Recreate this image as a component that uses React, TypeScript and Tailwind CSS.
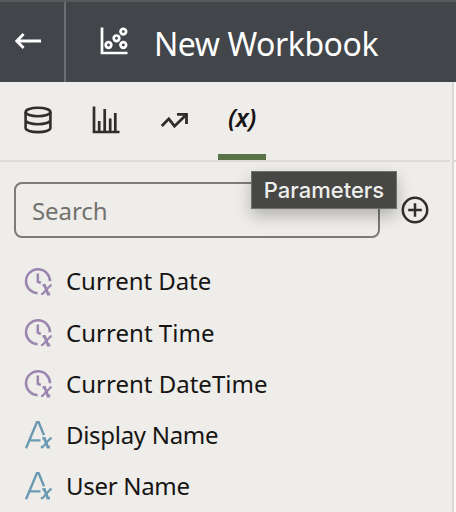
import React from 'react';

function ClockIcon() {
  return (
    <svg width="28" height="28" viewBox="0 0 28 28" fill="none" stroke="#9b86b0">
      <path d="M13.6 25.2A12 12 0 1 1 26 13.2" strokeWidth="2.5" />
      <path d="M13.8 5.5V13.6L16.8 15" strokeWidth="2.5" />
      <path d="M18.6 17.3H20.6L24 26H26.2" strokeWidth="2.8" />
      <path d="M27.8 17.3H26.6L18.5 26H17" strokeWidth="2.2" />
    </svg>
  );
}

function TextIcon() {
  return (
    <svg width="28" height="28" viewBox="0 0 28 28" fill="none" stroke="#6d9ab3">
      <path d="M2 27.2L12.9 1.2H14.7L20 14.2M5.8 19.4H16.5" strokeWidth="2.4" />
      <path d="M18.4 17.3H20.4L23.8 26.2H26" strokeWidth="2.8" />
      <path d="M27.8 17.3H26.4L18.5 26.2H16.8" strokeWidth="2.2" />
    </svg>
  );
}

const rows = [
  { label: 'Current Date', kind: 'clock', height: 'h-[52px]', icon: 'mt-[12px]', spacing: 'tracking-[-0.05px]' },
  { label: 'Current Time', kind: 'clock', height: 'h-[51px]', icon: 'mt-[11px]', spacing: 'tracking-[0.03px]' },
  { label: 'Current DateTime', kind: 'clock', height: 'h-[51px]', icon: 'mt-[11px]', spacing: 'tracking-[0.01px]' },
  { label: 'Display Name', kind: 'text', height: 'h-[51px]', icon: 'mt-[11px]', spacing: 'tracking-[-0.3px]' },
  { label: 'User Name', kind: 'text', height: 'h-[51px]', icon: 'mt-[11px]', spacing: 'tracking-[-0.3px]' },
];

export default function App() {
  return (
    <div className="h-[512px] w-[456px] overflow-hidden bg-[#eeede9] font-['Noto_Sans',sans-serif] text-[#161513]">
      <header className="flex h-[82px] border-t-2 border-[#58595b] bg-[#42454a] text-white">
        <div className="flex w-[66px] shrink-0 border-r-2 border-[#6c6e72] pl-[15px] pt-[31px]">
          <svg width="27" height="17" viewBox="0 0 27 17" fill="none" stroke="white" strokeWidth="2.8">
            <path d="M8.6 1L1.8 8L8.6 15M1.8 8H26" />
          </svg>
        </div>
        <div className="pl-[34px] pt-[24px]">
          <svg width="29" height="30" viewBox="0 0 29 30" fill="none" stroke="white" strokeWidth="2.7">
            <path d="M2 1.5V27H27.5" />
            <circle cx="8.5" cy="19" r="2.8" />
            <circle cx="16.5" cy="12.3" r="2.8" />
            <circle cx="23.3" cy="5.6" r="2.8" />
            <circle cx="23.3" cy="19" r="2.8" />
          </svg>
        </div>
        <h1 className="ml-[25px] mt-[20px] whitespace-nowrap text-[32px] leading-[44px] tracking-[-0.45px]">New Workbook</h1>
      </header>

      <div className="flex h-[430px]">
        <main className="w-[452px] shrink-0">
          <nav className="flex h-[80px] w-[450px] border-b-2 border-[#dddcd8] text-[#302e2a]">
            <div className="w-[92px] pl-[24px] pt-[24px]">
              <svg width="28" height="28" viewBox="0 0 28 28" fill="none" stroke="currentColor" strokeWidth="2.6">
                <ellipse cx="14" cy="6" rx="12.4" ry="4.2" />
                <path d="M1.6 6V22C1.6 24.4 7.2 26.1 14 26.1S26.4 24.4 26.4 22V6M1.6 14C1.6 16.4 7.2 18.2 14 18.2S26.4 16.4 26.4 14" />
              </svg>
            </div>
            <div className="w-[68px] pt-[24px]">
              <svg width="28" height="28" viewBox="0 0 28 28" fill="none" stroke="currentColor" strokeWidth="2.7">
                <path d="M2 .5V26H27.5M7.2 26V15M12.7 26V3M18.2 26V12.5M23.3 26V7" />
              </svg>
            </div>
            <div className="w-[58px] pt-[30px]">
              <svg width="29" height="18" viewBox="0 0 29 18" fill="none" stroke="currentColor" strokeWidth="2.8">
                <path d="M1.8 14L8.8 6.8L14.5 14.2L26 3M17 2.4H26.5V12" />
              </svg>
            </div>
            <div className="flex h-[78px] w-[48px] flex-col items-center border-b-6 border-[#5a7248] pt-[19px] text-[25px] font-semibold italic leading-[33px] tracking-[-0.3px] text-[#161513]">
              (x)
            </div>
          </nav>

          <div className="flex pl-[14px] pt-[20px]">
            <div className="relative h-[56px] w-[366px] rounded-[8px] border-2 border-[#7c7b77] pl-[16px] text-[24px] leading-[54px] tracking-[-0.1px] text-[#73726e]">
              Search
              <div className="absolute -top-[13px] left-[235px] flex h-[38px] w-[146px] items-center justify-center border-[1.5px] border-[#70706e] bg-[#474745] font-['Inter',sans-serif] text-[22px] font-medium leading-none tracking-[0px] text-[#eeeeec] shadow-[0_7px_16px_rgba(0,0,0,0.25)]">
                Parameters
              </div>
            </div>
            <svg className="ml-[21px] mt-[14px]" width="28" height="28" viewBox="0 0 28 28" fill="none" stroke="#302e2a" strokeWidth="2.5">
              <circle cx="14" cy="14" r="12.2" />
              <path d="M14 7.2V20.8M7.2 14H20.8" />
            </svg>
          </div>

          <ul className="pt-[18px]">
            {rows.map((row) => (
              <li key={row.label} className={`flex items-start pl-[24px] ${row.height}`}>
                <div className={`shrink-0 ${row.icon}`}>{row.kind === 'clock' ? <ClockIcon /> : <TextIcon />}</div>
                <span className={`ml-[14px] mt-[8px] whitespace-nowrap text-[24px] leading-[34px] ${row.spacing}`}>{row.label}</span>
              </li>
            ))}
          </ul>
        </main>
        <div className="w-[2px] bg-[#dad9d5]" />
        <div className="w-[2px] bg-[#fbfaf8] pt-[78px]">
          <div className="h-[2px] bg-[#dddcd8]" />
        </div>
      </div>
    </div>
  );
}
